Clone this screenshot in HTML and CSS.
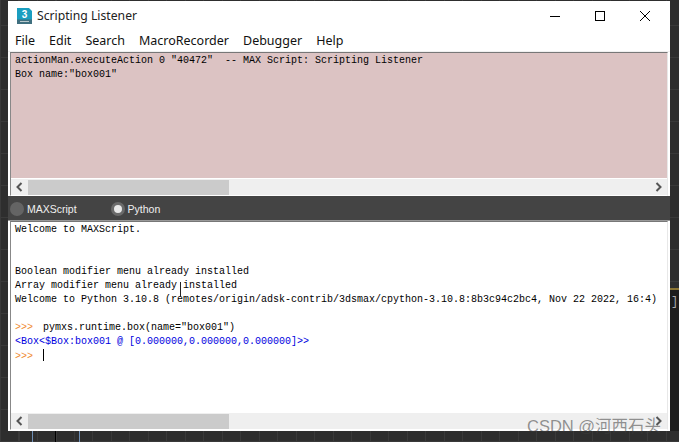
FILE: index.html
```html
<!DOCTYPE html>
<html lang="en">
<head>
<meta charset="utf-8">
<title>Scripting Listener</title>
<link rel="stylesheet" href="styles.css">
</head>
<body>
<div class="side-panel"><div class="side-text">]</div></div>
<i class="tick tick-a"></i><i class="tick tick-b"></i><i class="tick tick-c"></i>
<div class="window">
  <header class="titlebar">
    <svg class="app-icon" width="15" height="16" viewBox="0 0 15 16"><path d="M0 0h12l3 3v13H0z" fill="#1a9ec0"/><path d="M0 11.500h15V16H0z" fill="#3f6f7f"/><path d="M3 13.500h9" stroke="#b8c8cc"/><text x="7.500" y="9.500" class="app-icon-text">3</text></svg>
    <span class="title">Scripting Listener</span>
    <div class="controls">
      <svg width="12" height="12" viewBox="0 0 12 12"><path d="M1 6.500h10" stroke="#000" fill="none"/></svg>
      <svg width="12" height="12" viewBox="0 0 12 12"><rect x="1.500" y="1.500" width="9" height="9" stroke="#000" fill="none"/></svg>
      <svg width="12" height="12" viewBox="0 0 12 12"><path d="M1 1l10 10M11 1L1 11" stroke="#000" fill="none"/></svg>
    </div>
  </header>
  <nav class="menu"><span>File</span><span>Edit</span><span>Search</span><span>MacroRecorder</span><span>Debugger</span><span>Help</span></nav>
  <section class="pane pane-top">
    <pre class="code code-top">actionMan.executeAction 0 "40472"  -- MAX Script: Scripting Listener
Box name:"box001"</pre>
    <div class="scrollbar">
      <svg class="arrow" width="8" height="10" viewBox="0 0 8 10"><path d="M6 1L2 5l4 4" stroke="#555" stroke-width="2" fill="none"/></svg>
      <div class="track"><div class="thumb"></div></div>
      <svg class="arrow" width="8" height="10" viewBox="0 0 8 10"><path d="M2 1l4 4-4 4" stroke="#555" stroke-width="2" fill="none"/></svg>
    </div>
  </section>
  <div class="tabs">
    <label class="tab"><i class="radio"></i>MAXScript</label>
    <label class="tab"><i class="radio radio-on"></i>Python</label>
  </div>
  <section class="pane pane-bottom">
    <div class="cursor"></div>
    <pre class="code code-bottom">Welcome to MAXScript.


Boolean modifier menu already installed
Array modifier menu already installed
Welcome to Python 3.10.8 (remotes/origin/adsk-contrib/3dsmax/cpython-3.10.8:8b3c94c2bc4, Nov 22 2022, 16:4)

<span class="prompt">&gt;&gt;&gt;</span> pymxs.runtime.box(name="box001")
<span class="result">&lt;Box&lt;$Box:box001 @ [0.000000,0.000000,0.000000]&gt;&gt;</span>
<span class="prompt">&gt;&gt;&gt;</span> <span class="caret"></span></pre>
    <div class="scrollbar">
      <svg class="arrow" width="8" height="10" viewBox="0 0 8 10"><path d="M6 1L2 5l4 4" stroke="#555" stroke-width="2" fill="none"/></svg>
      <div class="track"><div class="thumb"></div></div>
      <svg class="arrow" width="8" height="10" viewBox="0 0 8 10"><path d="M2 1l4 4-4 4" stroke="#555" stroke-width="2" fill="none"/></svg>
    </div>
  </section>
</div>
<div class="watermark">CSDN @河西石头</div>
</body>
</html>
```
FILE: styles.css
```css
html, body { margin: 0; height: 442px; overflow: hidden; }
body {
  position: relative;
  background-color: #2e2e2e;
  background-image:
    repeating-linear-gradient(90deg, #3a3a3a 0 1px, transparent 1px 18.500px),
    repeating-linear-gradient(0deg, #3a3a3a 0 1px, transparent 1px 32px);
  padding: 1px 9px 0 8px;
  box-sizing: border-box;
  font-family: "Liberation Sans", Arial, sans-serif;
}
.side-panel {
  position: absolute;
  left: 670px;
  top: 288px;
  width: 9px;
  height: 143px;
  background: #1d1d1d;
  border-top: 2px solid #8a7433;
  box-sizing: border-box;
}
.side-text {
  font: 12px/14px "Liberation Mono", monospace;
  color: #aaa;
  margin: 5px 0 0 1px;
}
.tick { position: absolute; top: 431px; width: 1px; height: 11px; }
.tick-a { left: 32px; background: #6f8fb5; }
.tick-b { left: 55px; background: #000; }
.tick-c { left: 79px; background: #6f8fb5; }
.window {
  position: relative;
  height: 430px;
  background: #fff;
  display: flex;
  flex-direction: column;
  box-sizing: border-box;
}
.titlebar {
  height: 29px;
  display: flex;
  align-items: center;
  padding-left: 9px;
  flex: none;
}
.app-icon { margin-right: 5px; }
.app-icon-text { font: bold 10px "Liberation Sans", sans-serif; fill: #fff; text-anchor: middle; }
.title { font: 12.200px "Noto Sans", sans-serif; color: #222; }
.controls { margin-left: auto; display: flex; gap: 33px; padding-right: 19px; }
.controls svg { display: block; }
.menu {
  height: 21px;
  display: flex;
  gap: 14px;
  padding-left: 7px;
  align-items: center;
  font: 12.500px "Noto Sans", sans-serif;
  color: #111;
  flex: none;
  background: #fff;
  border-bottom: 1px solid #f0f0f0;
}
.pane {
  margin: 0 2px;
  display: flex;
  flex-direction: column;
  border-top: 1px solid #777;
  border-left: 1px solid #888;
  border-right: 1px solid #e8e8e8;
  border-bottom: 1px solid #fff;
  box-sizing: border-box;
}
.pane-top { height: 144px; flex: none; }
.pane-bottom { flex: 1; position: relative; background: #fff; margin-bottom: 1px; }
.code {
  margin: 0;
  flex: 1;
  padding: 1px 4px;
  font: 10px/14px "Liberation Mono", "Noto Sans CJK SC", monospace;
  color: #000;
  overflow: hidden;
  white-space: pre;
}
.code-top { background: #dcc3c3; }
.code-bottom { background: #fff; }
.prompt { color: #f08a30; margin-right: 4px; }
.result { color: #0000e0; }
.caret { display: inline-block; width: 1px; height: 12px; background: #000; vertical-align: -2px; }
.cursor { position: absolute; left: 169px; top: 60px; width: 1px; height: 15px; background: #222; }
.scrollbar {
  height: 16px;
  flex: none;
  background: #efefef;
  display: flex;
  align-items: center;
  border-top: 1px solid #fff;
}
.arrow { width: 17px; flex: none; }
.track { flex: 1; height: 15px; }
.thumb { width: 201px; height: 100%; background: #cbcbcb; }
.tabs {
  height: 25px;
  flex: none;
  background: #444;
  display: flex;
  align-items: center;
  color: #f0f0f0;
  font: 10.500px "Liberation Sans", sans-serif;
  padding: 1px 0 0 2px;
  gap: 34px;
  border-bottom: 1px solid #999;
  box-sizing: border-box;
}
.tab { display: flex; align-items: center; gap: 3px; line-height: 14px; }
.radio {
  width: 14px;
  height: 14px;
  border-radius: 50%;
  background: #646464;
  box-sizing: border-box;
  display: block;
}
.radio-on { background: #e8e8e8; border: 3px solid #6a6a6a; }
.watermark {
  position: absolute;
  left: 527px;
  top: 413px;
  font: 16.500px "Liberation Sans", "Noto Sans CJK SC", sans-serif;
  color: rgba(60, 60, 60, 0.55);
}
```
